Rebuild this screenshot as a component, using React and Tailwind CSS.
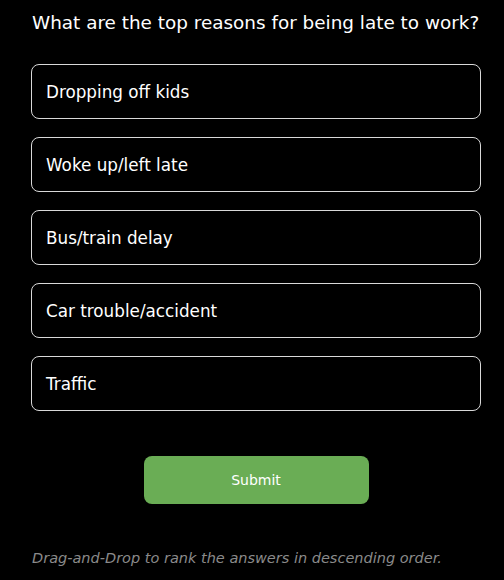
import React, { useState } from "react";

const Answers = [
  "Dropping off kids",
  "Woke up/left late",
  "Bus/train delay",
  "Car trouble/accident",
  "Traffic"
];

export default function App() {
  const [answers] = useState(Answers);

  return (
    <div
      className="min-h-[580px] w-full bg-black pl-[31px] pr-[23px] pt-[10px] text-white"
      style={{ fontFamily: '"DejaVu Sans", "Open Sans", sans-serif' }}
    >
      <h1 className="pl-[1px] text-[18.4px] leading-[26px] font-normal">
        What are the top reasons for being late to work?
      </h1>

      <div className="mt-[28px] flex flex-col gap-[18px]">
        {answers.map(answer => (
          <div
            key={answer}
            className="flex h-[55px] items-center rounded-[8px] border border-[#d9d9d9] px-[14px] pt-[3px] text-[16.8px]"
          >
            {answer}
          </div>
        ))}
      </div>

      <div className="mt-[45px] flex justify-center">
        <button className="h-[48px] w-[225px] rounded-[8px] bg-[#6aad55] text-[14px] text-white">
          Submit
        </button>
      </div>

      <p className="mt-[44px] pl-[1px] text-[14.5px] italic text-[#8a8a8a]">
        Drag-and-Drop to rank the answers in descending order.
      </p>
    </div>
  );
}
